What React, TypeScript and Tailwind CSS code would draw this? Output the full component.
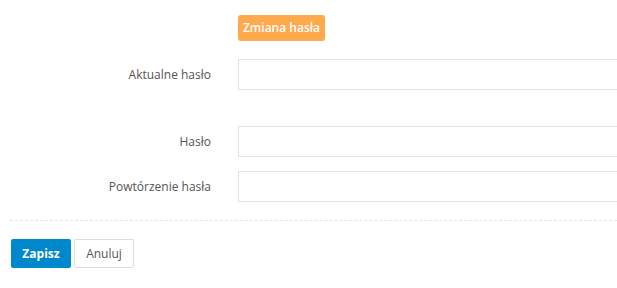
import React from 'react';

const Row: React.FC<{ label: string; className?: string }> = ({ label, className }) => (
  <div className={`flex items-center ${className ?? ''}`}>
    <label className="w-[211px] shrink-0 text-right text-[12px] text-[#555]">{label}</label>
    <input
      type="password"
      className="ml-[27px] h-[31px] w-[400px] shrink-0 border border-[#e2e2e2] bg-white outline-none"
    />
  </div>
);

export default function App() {
  return (
    <div className="h-[288px] w-[617px] overflow-hidden bg-white font-['Open_Sans',sans-serif]">
      <div className="pt-[14px]">
        <div className="pl-[238px]">
          <span className="inline-flex h-[26px] w-[87px] items-center justify-center rounded-[3px] bg-[#ffa94d] text-[12px] font-semibold text-white">
            Zmiana hasła
          </span>
        </div>
        <Row label="Aktualne hasło" className="mt-[18px]" />
        <Row label="Hasło" className="mt-[36px]" />
        <Row label="Powtórzenie hasła" className="mt-[14px]" />
        <div className="ml-[10px] mt-[18px] border-t border-dashed border-[#e5e5e5]" />
        <div className="mt-[18px] flex gap-[3px] pl-[11px]">
          <button className="h-[29px] w-[60px] rounded-[2px] bg-[#0088cc] text-[12px] font-bold text-white">
            Zapisz
          </button>
          <button className="h-[29px] w-[60px] rounded-[2px] border border-[#dddddd] bg-white text-[12px] text-[#555]">
            Anuluj
          </button>
        </div>
      </div>
    </div>
  );
}
